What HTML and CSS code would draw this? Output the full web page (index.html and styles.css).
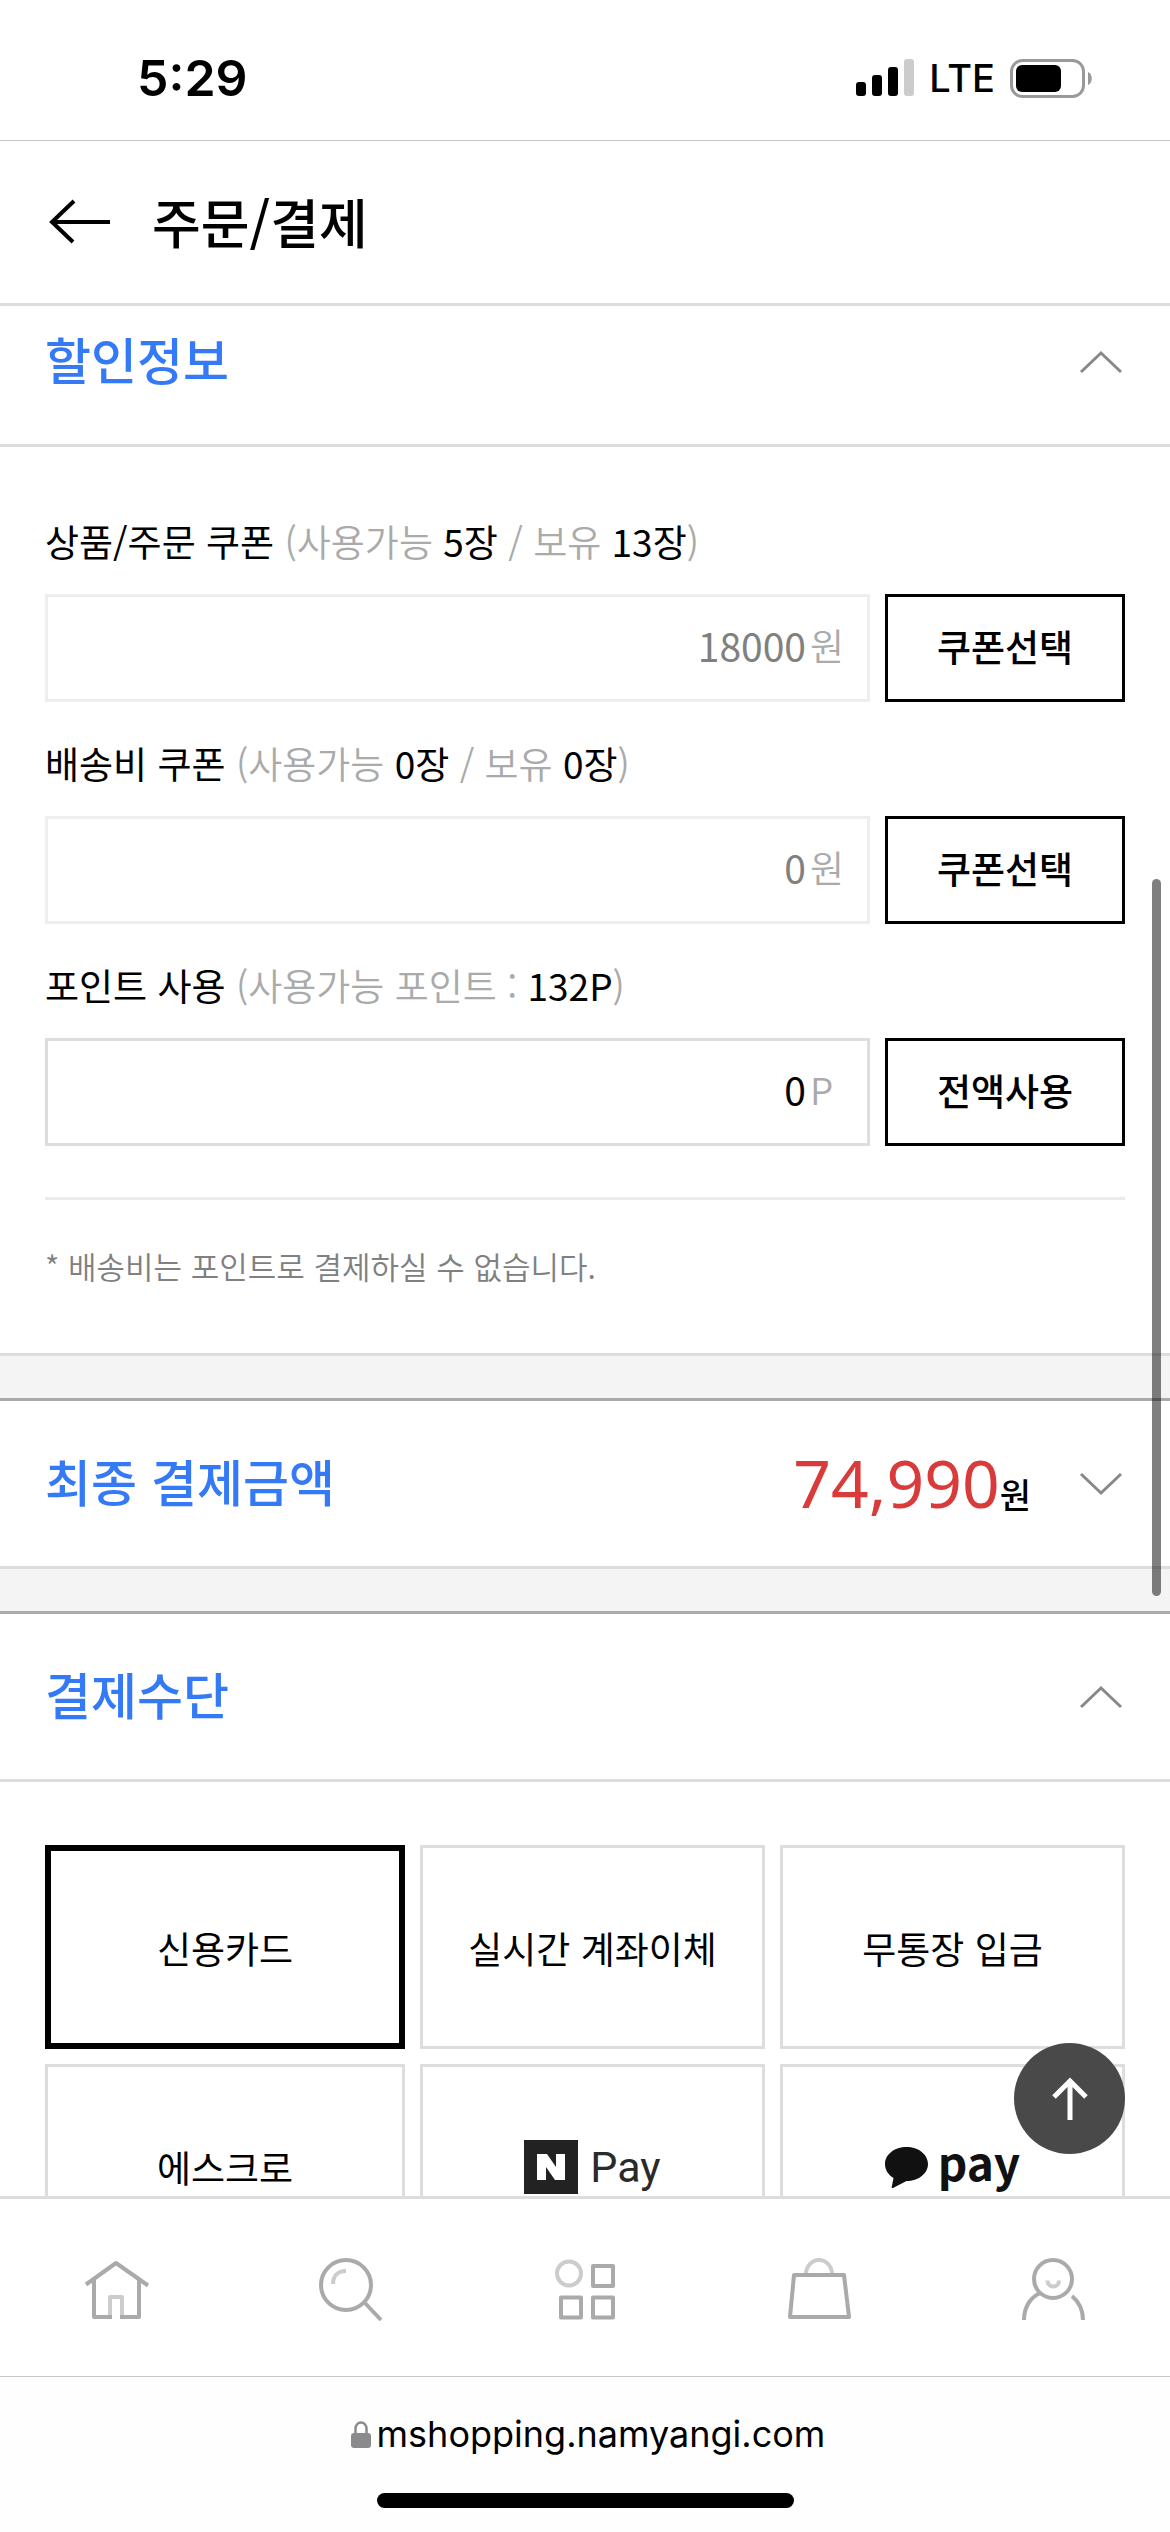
FILE: index.html
```html
<!DOCTYPE html>
<html lang="ko">
<head>
<meta charset="utf-8">
<meta name="viewport" content="width=device-width, initial-scale=1">
<title>주문/결제</title>
<link rel="stylesheet" href="styles.css">
</head>
<body>
<div class="app">
  <div class="status">
    <time class="status-time">5:29</time>
    <div class="status-right">
      <svg class="signal" viewBox="0 0 58 38" aria-hidden="true">
        <rect x="0" y="23" width="10" height="14" rx="3"/>
        <rect x="16" y="16" width="10" height="21" rx="3"/>
        <rect x="32" y="8" width="10" height="29" rx="3"/>
        <rect x="48" y="0" width="10" height="37" rx="3" fill="#ccc"/>
      </svg>
      <span class="network">LTE</span>
      <svg class="battery" viewBox="0 0 83 39" aria-hidden="true">
        <rect x="1.500" y="1.500" width="72" height="36" rx="11" fill="none" stroke="#999" stroke-width="3"/>
        <rect x="6" y="6" width="45" height="27" rx="6"/>
        <path d="M78 13c5 2 5 11 0 13z" fill="#999"/>
      </svg>
    </div>
  </div>

  <header class="header">
    <button class="back" type="button" aria-label="뒤로">
      <svg viewBox="0 0 64 48" aria-hidden="true"><path d="M62 24H4M26 3L4 24l21 20" fill="none" stroke="#000" stroke-width="4"/></svg>
    </button>
    <h1 class="title">주문/결제</h1>
  </header>

  <main class="content">
    <section class="section">
      <div class="section-head section-head-first">
        <h2 class="section-title">할인정보</h2>
        <button class="toggle" type="button" aria-label="접기"><svg viewBox="0 0 44 24"><path d="M2 22L22 3l20 19"/></svg></button>
      </div>
      <div class="discount">
        <div class="group">
          <label class="label" for="goods">상품/주문 쿠폰 <span class="hint">(사용가능 <b>5장</b> / 보유 <b>13장</b>)</span></label>
          <div class="row">
            <div class="field is-disabled"><input id="goods" class="input" value="18000" disabled><span class="unit">원</span></div>
            <button class="action" type="button">쿠폰선택</button>
          </div>
        </div>
        <div class="group">
          <label class="label" for="delivery">배송비 쿠폰 <span class="hint">(사용가능 <b>0장</b> / 보유 <b>0장</b>)</span></label>
          <div class="row">
            <div class="field is-disabled"><input id="delivery" class="input" value="0" disabled><span class="unit">원</span></div>
            <button class="action" type="button">쿠폰선택</button>
          </div>
        </div>
        <div class="group">
          <label class="label" for="point">포인트 사용 <span class="hint">(사용가능 포인트 : <b>132P</b>)</span></label>
          <div class="row">
            <div class="field"><input id="point" class="input" value="0"><span class="unit">P</span></div>
            <button class="action" type="button">전액사용</button>
          </div>
        </div>
        <p class="note">* 배송비는 포인트로 결제하실 수 없습니다.</p>
      </div>
    </section>

    <section class="section">
      <div class="section-head">
        <h2 class="section-title">최종 결제금액</h2>
        <p class="total"><strong class="price">74,990</strong>원</p>
        <button class="toggle" type="button" aria-label="펼치기"><svg viewBox="0 0 44 24"><path d="M2 2l20 19L42 2"/></svg></button>
      </div>
    </section>

    <section class="section">
      <div class="section-head">
        <h2 class="section-title">결제수단</h2>
        <button class="toggle" type="button" aria-label="접기"><svg viewBox="0 0 44 24"><path d="M2 22L22 3l20 19"/></svg></button>
      </div>
      <div class="methods">
        <button class="method is-selected" type="button">신용카드</button>
        <button class="method" type="button">실시간 계좌이체</button>
        <button class="method" type="button">무통장 입금</button>
        <button class="method" type="button">에스크로</button>
        <button class="method" type="button">
          <svg class="naver" viewBox="0 0 54 54" aria-hidden="true"><path fill="#222" d="M0 0h54v54H0z"/><path fill="#fff" d="M13 14h10l9 13V14h9v26H31l-9-13v13h-9z"/></svg>
          <span class="naver-text">Pay</span>
        </button>
        <button class="method" type="button">
          <svg class="kakao" viewBox="0 0 43 41" aria-hidden="true"><path fill="#111" d="M21.500 0C33.500 0 43 7.500 43 17s-9.500 17-21.500 17L8 41c-1 .5-1.500 0-1.300-1L8.500 31C3.500 28 0 23 0 17 0 7.500 9.500 0 21.500 0z"/></svg>
          <span class="kakao-text">pay</span>
        </button>
      </div>
    </section>
  </main>

  <nav class="tabs">
    <a class="tab" href="#home" aria-label="홈"><svg viewBox="0 0 72 72"><path class="soft" d="M29 67V45h12v22"/><path d="M5 32.500L35 11l32 22.500M13 28v37h18M58 28v37H39"/></svg></a>
    <a class="tab" href="#search" aria-label="검색"><svg viewBox="0 0 72 72"><circle cx="31" cy="33" r="25"/><path d="M50 51l16 17"/><path class="soft" d="M18 32c0-8 5-13 13-13"/></svg></a>
    <a class="tab" href="#category" aria-label="카테고리"><svg viewBox="0 0 72 72"><circle class="soft" cx="20" cy="21.500" r="12"/><path d="M44 14h20v20H44zM12 45.500h20v20H12zM44 45.500h20v20H44z"/></svg></a>
    <a class="tab" href="#cart" aria-label="장바구니"><svg viewBox="0 0 72 72"><path class="soft" d="M23 22a13 14 0 0 1 26 0"/><path d="M11 23h50l5 42H7z"/></svg></a>
    <a class="tab" href="#my" aria-label="마이페이지"><svg viewBox="0 0 72 72"><circle cx="36" cy="27" r="19"/><path d="M23 41C12 46 7 57 7 68M55 44c7 6 11 14 11 24"/><path class="soft" d="M30.500 28.500c0 8 11.500 8 11.500 0"/></svg></a>
  </nav>

  <footer class="browser">
    <div class="address">
      <svg class="lock" viewBox="0 0 20 27" aria-hidden="true"><path d="M4.500 13V7.500a5.500 6 0 0 1 11 0V13" fill="none" stroke="#8a8a8c" stroke-width="2.500"/><rect y="12" width="20" height="15" rx="3" fill="#8a8a8c"/></svg>
      <span>mshopping.namyangi.com</span>
    </div>
    <div class="home-bar"></div>
  </footer>

  <button class="to-top" type="button" aria-label="맨 위로"><svg viewBox="0 0 40 44" aria-hidden="true"><path d="M20 43V4M4 20L20 4l16 16" fill="none" stroke="#fff" stroke-width="5"/></svg></button>
  <div class="scroll-thumb"></div>
</div>
</body>
</html>
```
FILE: styles.css
```css
* { box-sizing: border-box; }

body {
  margin: 0;
  background: #fff;
  color: #000;
  font-family: "Noto Sans CJK KR", sans-serif;
  font-size: 37px;
  line-height: 54px;
}

h1, h2, p { margin: 0; font-weight: 500; }

button {
  padding: 0;
  border: 0;
  background: none;
  color: inherit;
  font: inherit;
}

svg { display: block; }

.app {
  position: relative;
  display: flex;
  flex-direction: column;
  height: 100vh;
  overflow: hidden;
}

/* Status bar */
.status {
  flex: none;
  display: flex;
  align-items: center;
  justify-content: space-between;
  height: 141px;
  padding: 16px 77px 0 137px;
  border-bottom: 1px solid #c6c6c6;
  font-family: Inter, sans-serif;
}
.status-time { font-size: 50px; font-weight: 600; }
.status-right { display: flex; align-items: center; gap: 15px; }
.network { font-size: 38px; font-weight: 500; }
.signal { width: 58px; height: 38px; }
.battery { width: 83px; height: 39px; }

/* Page header */
.header {
  flex: none;
  display: flex;
  align-items: center;
  gap: 40px;
  height: 165px;
  padding-left: 48px;
  border-bottom: 3px solid #ddd;
}
.back svg { width: 64px; height: 48px; }
.title { padding-bottom: 3px; font-size: 53px; }

/* Sections */
.content { flex: 1; min-height: 0; overflow: hidden; }
.section + .section {
  border-top: 42px solid #f4f4f4;
}
.section-head {
  display: flex;
  align-items: center;
  justify-content: space-between;
  height: 171px;
  padding: 0 47px 0 45px;
  border-top: 3px solid #aaa;
  border-bottom: 3px solid #ddd;
}
.section-head-first { height: 141px; padding-bottom: 27px; border-top: 0; }
.section-title { flex: 1; padding-bottom: 8px; color: #347af7; font-size: 50px; }
.toggle svg {
  width: 44px;
  height: 24px;
  fill: none;
  stroke: #888;
  stroke-width: 3;
}

/* Discounts */
.discount { padding: 67px 45px 60px; border-bottom: 3px solid #ddd; }
.group { margin-bottom: 34px; }
.label { display: block; margin-bottom: 26px; }
.hint { color: #aaa; font-weight: 350; }
.hint b { color: #000; font-weight: 400; }
.row { display: flex; gap: 15px; }
.field {
  flex: 1;
  display: flex;
  align-items: center;
  height: 108px;
  padding: 0 21px 6px 0;
  border: 3px solid #ddd;
}
.is-disabled { border-color: #eee; }
.input {
  flex: 1;
  min-width: 0;
  padding: 0;
  border: 0;
  background: none;
  color: #000;
  font-family: inherit;
  font-size: 39px;
  text-align: right;
}
.input:disabled { color: #808080; }
.unit { width: 40px; padding-left: 4px; color: #aaa; font-weight: 350; }
.action { width: 240px; height: 108px; padding-bottom: 4px; border: 3px solid #000; font-weight: 500; }
.note {
  margin-top: 51px;
  padding-top: 40px;
  padding-bottom: 2px;
  border-top: 3px solid #ebebeb;
  color: #808080;
  font-size: 31px;
  font-weight: 350;
  line-height: 51px;
}

/* Total */
.total { display: flex; align-items: baseline; margin-right: 48px; padding-top: 8px; font-size: 34px; }
.price { color: #d93a3a; font-family: "Noto Sans", sans-serif; font-size: 66px; font-weight: 400; }

/* Payment methods */
.methods {
  display: grid;
  grid-template-columns: 360fr 345fr 345fr;
  gap: 15px;
  padding: 63px 45px;
}
.method {
  display: flex;
  align-items: center;
  justify-content: center;
  height: 204px;
  padding-top: 2px;
  border: 3px solid #ddd;
}
.is-selected { border: 6px solid #000; }
.naver { width: 54px; height: 54px; }
.naver-text { margin-left: 12px; color: #2a2a2a; font-family: Roboto, sans-serif; font-size: 43px; }
.kakao { width: 43px; height: 41px; }
.kakao-text { margin-left: 10px; padding-bottom: 12px; color: #111; font-size: 46px; font-weight: 700; }

/* Bottom tabs */
.tabs {
  flex: none;
  display: grid;
  grid-template-columns: repeat(5, 1fr);
  height: 180px;
  border-top: 3px solid #ddd;
}
.tab { display: flex; align-items: center; justify-content: center; }
.tab svg {
  width: 72px;
  height: 72px;
  fill: none;
  stroke: #aaa;
  stroke-width: 4;
  stroke-linejoin: round;
}
.tab .soft { stroke: #ccc; }

/* Browser bar */
.browser {
  flex: none;
  display: flex;
  flex-direction: column;
  align-items: center;
  justify-content: space-between;
  height: 156px;
  padding: 30px 0 24px;
  border-top: 1px solid #c6c6c6;
  background: #fefefe;
  font-family: Inter, sans-serif;
  font-size: 36px;
}
.address { display: flex; align-items: center; gap: 6px; padding-left: 6px; }
.lock { width: 20px; height: 27px; }
.home-bar { width: 417px; height: 15px; border-radius: 8px; background: #000; }

/* Overlays */
.to-top {
  position: absolute;
  right: 45px;
  bottom: 378px;
  display: flex;
  align-items: center;
  justify-content: center;
  width: 111px;
  height: 111px;
  border-radius: 50%;
  background: #494949;
}
.to-top svg { width: 40px; height: 44px; }
.scroll-thumb {
  position: absolute;
  top: 879px;
  right: 9px;
  width: 9px;
  height: 717px;
  border-radius: 5px;
  background: rgba(0, 0, 0, .5);
}
```
